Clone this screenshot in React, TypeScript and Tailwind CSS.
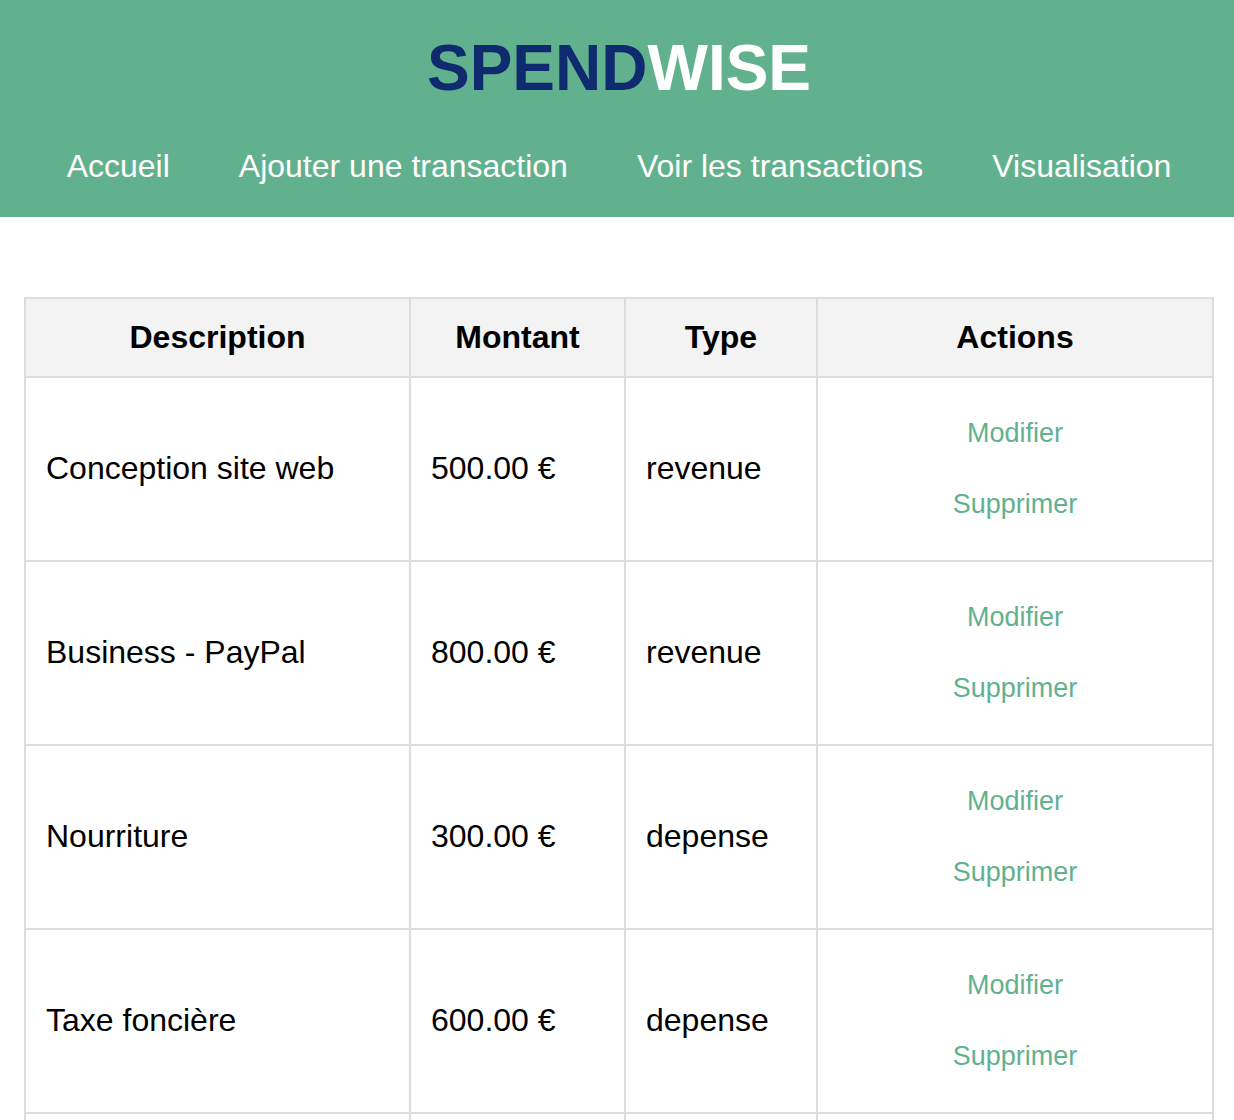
const links = ["Accueil", "Ajouter une transaction", "Voir les transactions", "Visualisation"];

const columns = [
  { label: "Description", width: "w-[385px]" },
  { label: "Montant", width: "w-[215px]" },
  { label: "Type", width: "w-[192px]" },
  { label: "Actions", width: "" },
];

const transactions = [
  { description: "Conception site web", amount: "500.00 €", type: "revenue" },
  { description: "Business - PayPal", amount: "800.00 €", type: "revenue" },
  { description: "Nourriture", amount: "300.00 €", type: "depense" },
  { description: "Taxe foncière", amount: "600.00 €", type: "depense" },
];

const cell = "border-2 border-[#dddddd] px-5 pb-0.5";

export default function App() {
  return (
    <div className="min-h-screen bg-white font-['Liberation_Sans',Arial,sans-serif] text-[32px] leading-9 text-black">
      <header className="bg-[#62b18e] pt-8 pb-[33px] pl-1">
        <h1 className="text-center text-[64px] leading-[72px] font-bold text-white">
          <span className="text-[#102a6f]">SPEND</span>WISE
        </h1>
        <nav aria-label="Navigation principale" className="mt-11">
          <ul className="flex justify-center gap-[69px] text-white">
            {links.map((link) => (
              <li key={link}>
                <a href="#" className="whitespace-nowrap">{link}</a>
              </li>
            ))}
          </ul>
        </nav>
      </header>
      <main className="mt-20 pr-5 pl-6">
        <table className="w-full table-fixed border-collapse">
          <thead>
            <tr className="h-[79px] bg-[#f3f3f3]">
              {columns.map((column) => (
                <th key={column.label} scope="col" className={`${cell} ${column.width} text-center font-bold`}>
                  {column.label}
                </th>
              ))}
            </tr>
          </thead>
          <tbody>
            {transactions.map((transaction) => (
              <tr key={transaction.description} className="h-[184px]">
                <td className={cell}>{transaction.description}</td>
                <td className={cell}>{transaction.amount}</td>
                <td className={cell}>{transaction.type}</td>
                <td className={cell}>
                  <div className="flex flex-col items-center gap-[41px] text-[27px] leading-[30px] text-[#62b18e]">
                    <button type="button">Modifier</button>
                    <button type="button">Supprimer</button>
                  </div>
                </td>
              </tr>
            ))}
            <tr className="h-[184px]">
              {columns.map((column) => (
                <td key={column.label} className={cell} />
              ))}
            </tr>
          </tbody>
        </table>
      </main>
    </div>
  );
}
